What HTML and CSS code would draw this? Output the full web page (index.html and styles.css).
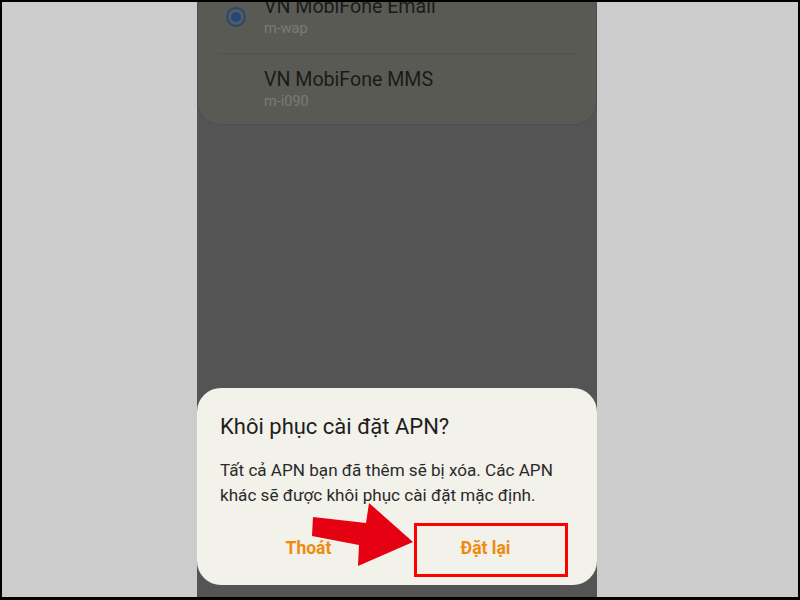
FILE: index.html
```html
<!DOCTYPE html>
<html lang="vi">
  <head>
    <meta charset="UTF-8" />
    <meta name="viewport" content="width=device-width, initial-scale=1.0" />
    <title>Khôi phục cài đặt APN</title>
    <link rel="stylesheet" href="styles.css">
  </head>
  <body>
    <div class="frame">
      <div class="phone">
        <div class="apn-card">
          <div class="apn-row">
            <span class="radio checked"></span>
            <div class="apn-text">
              <div class="apn-name">VN MobiFone Email</div>
              <div class="apn-sub">m-wap</div>
            </div>
          </div>
          <div class="divider"></div>
          <div class="apn-row last">
            <span class="radio"></span>
            <div class="apn-text">
              <div class="apn-name">VN MobiFone MMS</div>
              <div class="apn-sub">m-i090</div>
            </div>
          </div>
        </div>

        <div class="dialog">
          <h2 class="dialog-title">Khôi phục cài đặt APN?</h2>
          <p class="dialog-body">Tất cả APN bạn đã thêm sẽ bị xóa. Các APN khác sẽ được khôi phục cài đặt mặc định.</p>
          <div class="dialog-actions">
            <button class="action">Thoát</button>
            <button class="action">Đặt lại</button>
          </div>
          <!-- annotation: arrow + highlight box -->
          <svg class="annotation" width="400" height="197" viewBox="0 0 400 197">
            <polygon fill="#e50012" points="116,129 169,135 172,115 216,154 161,178 162,157 115,148" />
            <rect x="218.5" y="136.5" width="151" height="51" fill="none" stroke="#ff0000" stroke-width="3" />
          </svg>
        </div>
      </div>
    </div>
  </body>
</html>
```

FILE: styles.css
```css
body {
  margin: 0;
  font-family: Roboto, "Noto Sans", Arial, sans-serif;
}
.frame {
  width: 800px;
  height: 600px;
  box-sizing: border-box;
  border: solid #000;
  border-width: 2px 2px 3px 2px;
  background: #cccccc;
  display: flex;
  overflow: hidden;
}
.phone {
  width: 400px;
  margin-left: 195px;
  background: #545454;
  display: flex;
  flex-direction: column;
  overflow: hidden;
}
.apn-card {
  margin: -21px 1px 0 1px;
  background: #5a5a55;
  border-radius: 22px;
  box-shadow: 0 0 0 1px rgba(0, 0, 0, 0.07);
}
.apn-row {
  display: flex;
  align-items: center;
  padding: 15px 20px 15px 28px;
}
.apn-row.last {
  padding-bottom: 13px;
}
.radio {
  width: 20px;
  height: 20px;
  box-sizing: border-box;
  border-radius: 50%;
  margin-right: 18px;
  flex: none;
}
.radio.checked {
  border: 2px solid #22477f;
  position: relative;
}
.radio.checked::after {
  content: "";
  position: absolute;
  left: 3px;
  top: 3px;
  width: 10px;
  height: 10px;
  border-radius: 50%;
  background: #22477f;
}
.apn-name {
  font-size: 19.6px;
  line-height: 22px;
  color: #1a1a19;
}
.apn-sub {
  margin-top: 2px;
  font-size: 14.5px;
  line-height: 18px;
  color: #7a7a73;
}
.divider {
  height: 1px;
  margin: 0 19px;
  background: #52524e;
}
.dialog {
  position: relative;
  margin-top: auto;
  margin-bottom: 12px;
  height: 197px;
  box-sizing: border-box;
  padding: 25px 23px 17px 23px;
  background: #f2f1ea;
  border-radius: 24px;
}
.dialog-title {
  margin: 0;
  font-size: 22px;
  line-height: 28px;
  font-weight: 400;
  color: #1e1e1e;
}
.dialog-body {
  margin: 17px 0 0 0;
  font-size: 17.1px;
  line-height: 25px;
  color: #2a2a2a;
}
.dialog-actions {
  display: flex;
  margin-top: 20px;
}
.action {
  flex: 1;
  height: 40px;
  border: none;
  background: none;
  font-family: inherit;
  font-size: 17.5px;
  font-weight: 700;
  color: #ef8a0e;
  padding: 0;
}
.annotation {
  position: absolute;
  left: 0;
  top: 0;
}
```
